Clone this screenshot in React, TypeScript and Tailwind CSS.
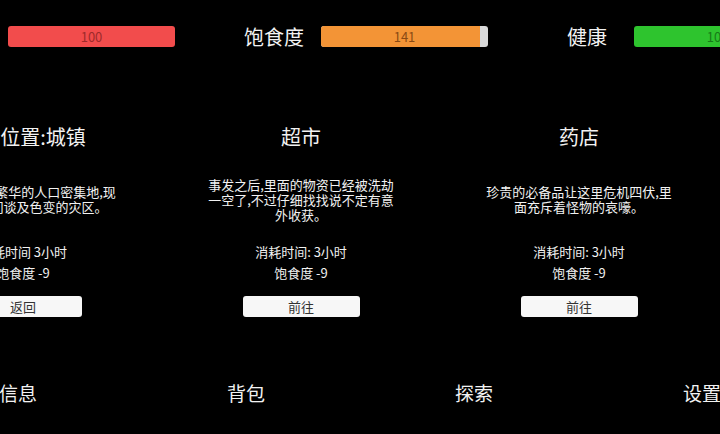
import React from "react";

const font = { fontFamily: '"Noto Sans CJK SC", "Noto Sans", sans-serif' };

type Stat = {
  label: string;
  value: number;
  max: number;
  fill: string;
  text: string;
};

const stats: Stat[] = [
  { label: "体力", value: 100, max: 100, fill: "bg-[#f24c4c]", text: "text-[#9e2a2a]" },
  { label: "饱食度", value: 141, max: 148, fill: "bg-[#f39436]", text: "text-[#8a4a14]" },
  { label: "健康", value: 100, max: 100, fill: "bg-[#2ec42e]", text: "text-[#177a17]" },
];

const places = [
  {
    title: "当前位置:城镇",
    desc: "这里曾经是繁华的人口密集地,现在已是人们谈及色变的灾区。",
    time: "消耗时间 3小时",
    hunger: "饱食度 -9",
    action: "返回",
  },
  {
    title: "超市",
    desc: "事发之后,里面的物资已经被洗劫一空了,不过仔细找找说不定有意外收获。",
    time: "消耗时间: 3小时",
    hunger: "饱食度 -9",
    action: "前往",
  },
  {
    title: "药店",
    desc: "珍贵的必备品让这里危机四伏,里面充斥着怪物的哀嚎。",
    time: "消耗时间: 3小时",
    hunger: "饱食度 -9",
    action: "前往",
  },
];

const tabs = ["信息", "背包", "探索", "设置"];

const Bar: React.FC<{ stat: Stat }> = ({ stat }) => {
  const pct = (stat.value / stat.max) * 100;
  return (
    <div className="relative w-[167px] h-[21px] rounded-[3px] bg-[#d9d9d9] overflow-hidden">
      <div className={`h-full ${stat.fill}`} style={{ width: `${pct}%` }} />
      <span
        className={`absolute inset-0 flex items-center justify-center text-[13px] ${stat.text}`}
      >
        {stat.value}
      </span>
    </div>
  );
};

const App: React.FC = () => {
  return (
    <div className="w-[720px] h-[434px] bg-black text-[#f2f2f2] overflow-hidden" style={font}>
      {/* Статусы */}
      <div className="flex items-center pt-[26px] ml-[-86px]">
        {stats.map((s) => (
          <div key={s.label} className="flex items-center shrink-0 mr-[52px]">
            <div className="w-[94px] text-center text-[20px] leading-[21px]">{s.label}</div>
            <Bar stat={s} />
          </div>
        ))}
      </div>

      {/* Места */}
      <div className="flex ml-[-116px] mt-[76px]">
        {places.map((p) => (
          <div key={p.title} className="w-[278px] shrink-0 flex flex-col items-center">
            <div className="h-[28px] leading-[28px] text-[20px] whitespace-nowrap">{p.title}</div>
            <div className="mt-[18px] h-[60px] w-[190px] flex items-center justify-center">
              <p className="text-[13px] leading-[15px] text-center">{p.desc}</p>
            </div>
            <div className="mt-[13px] h-[20px] leading-[20px] text-[13px] whitespace-nowrap">{p.time}</div>
            <div className="mt-[1px] h-[20px] leading-[20px] text-[13px] whitespace-nowrap">{p.hunger}</div>
            <button className="mt-[13px] w-[117px] h-[21px] rounded-[3px] bg-[#f7f7f7] text-[#333] text-[13px] leading-[21px]">
              {p.action}
            </button>
          </div>
        ))}
      </div>

      {/* Нижнее меню */}
      <div className="flex ml-[-96px] mt-[63px]">
        {tabs.map((t) => (
          <div key={t} className="w-[228px] shrink-0 text-center text-[19px] leading-[26px]">
            {t}
          </div>
        ))}
      </div>
    </div>
  );
};

export default App;
